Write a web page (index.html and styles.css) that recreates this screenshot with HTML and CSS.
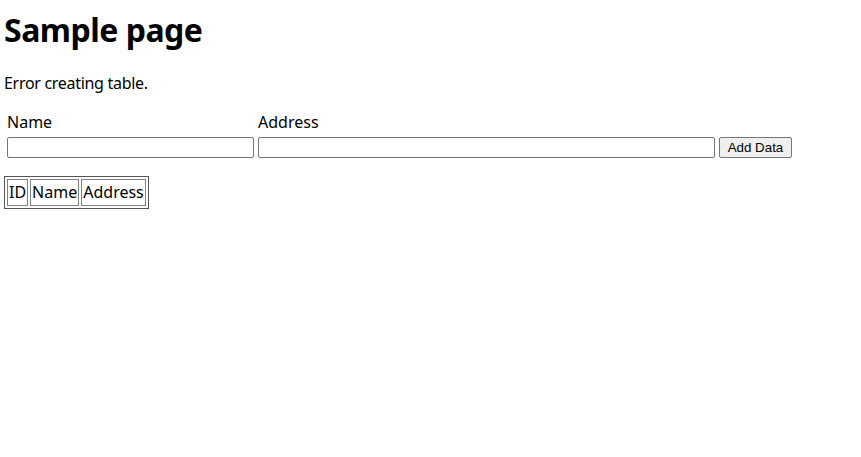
FILE: index.html
```html
<!DOCTYPE html>
<html>
<head>
  <meta charset="utf-8">
  <title>Sample page</title>
  <link rel="stylesheet" href="styles.css">
</head>
<body>
  <h1 class="title">Sample page</h1>
  <p class="status">Error creating table.</p>

  <form class="entry-form">
    <table class="entry-table">
      <tr>
        <td><label for="name">Name</label></td>
        <td><label for="address">Address</label></td>
        <td></td>
      </tr>
      <tr>
        <td><input type="text" id="name" class="field field-name"></td>
        <td><input type="text" id="address" class="field field-address"></td>
        <td><button type="button" class="add-btn">Add Data</button></td>
      </tr>
    </table>
  </form>

  <table class="data-table">
    <tr>
      <td>ID</td>
      <td>Name</td>
      <td>Address</td>
    </tr>
  </table>
</body>
</html>
```

FILE: styles.css
```css
html, body {
  background: #fff;
}

body {
  margin: 0 4px;
  padding-top: 10px;
  font-family: "Noto Sans", "Open Sans", sans-serif;
  font-size: 16px;
  line-height: 22px;
  color: #000;
}

.title {
  margin: 0;
  font-size: 32px;
  line-height: 40px;
  font-weight: bold;
  letter-spacing: -0.5px;
}

.status {
  margin: 22px 0 0;
  letter-spacing: -0.3px;
}

.entry-form {
  margin: 14px 0 0;
}

.entry-table {
  border-spacing: 2px;
}

.entry-table td {
  padding: 1px;
  vertical-align: middle;
}

.field {
  display: block;
  box-sizing: border-box;
  height: 21px;
  margin: 0;
  padding: 1px 2px;
  border: 1px solid #767676;
  border-radius: 2px;
  background: #fff;
  font-size: 13px;
}

.field-name {
  width: 247px;
}

.field-address {
  width: 457px;
}

.add-btn {
  display: block;
  box-sizing: border-box;
  width: 73px;
  height: 21px;
  margin: 0;
  padding: 1px 4px;
  border: 1px solid #767676;
  border-radius: 2px;
  background: #efefef;
  color: #000;
  font-family: "Liberation Sans", Arial, sans-serif;
  font-size: 13.33px;
  line-height: 16px;
}

.data-table {
  margin-top: 15px;
  border: 1px solid #555;
  border-spacing: 2px;
  line-height: 23px;
}

.data-table td {
  padding: 1px;
  border: 1px solid #808080;
}
```
